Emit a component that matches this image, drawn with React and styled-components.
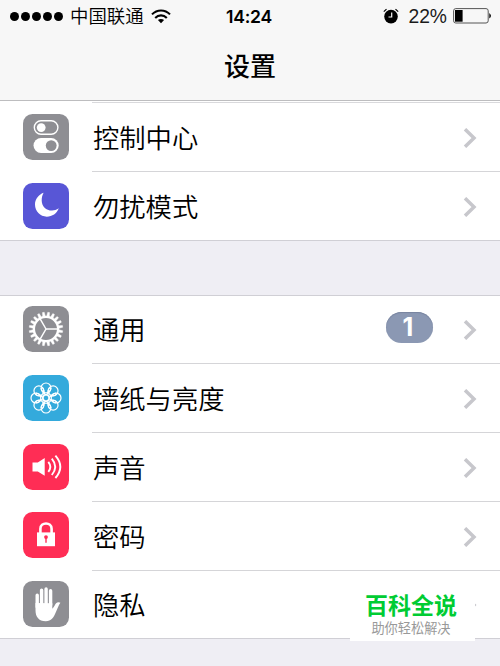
import React from 'react'
import styled, { createGlobalStyle } from 'styled-components'

const petals = [0, 45, 90, 135, 180, 225, 270, 315]
const teeth = Array.from({ length: 20 }, (_, i) => i * 18)

const ControlIcon = () => (
  <>
    <rect x="11.3" y="6.8" width="23.6" height="13.4" rx="6.7" fill="none" stroke="#fff" strokeWidth="1.4" />
    <circle cx="18.2" cy="13.6" r="4.4" fill="#fff" />
    <rect x="10.5" y="24" width="25.2" height="15" rx="7.5" fill="#fff" />
    <circle cx="28.2" cy="31.6" r="5.4" fill="#8e8e93" />
  </>
)

const MoonIcon = () => (
  <path d="M20.6 9.8C15.4 11.8 12 16.3 12 21.6C12 28.3 17.2 33.7 23.8 33.7C29.2 33.7 33.9 30.5 35.8 25.3C33.5 27 31.4 27.5 29 27.5C23 27.5 18.7 23 18.7 17.4C18.7 14.5 19.4 12 20.6 9.8Z" fill="#fff" />
)

const GearIcon = () => (
  <g stroke="#fff" fill="none">
    <circle cx="23" cy="23" r="12.1" strokeWidth="2.3" />
    {teeth.map((a) => (
      <path key={a} d="M21.6 11L22.1 6.2H23.9L24.4 11Z" fill="#fff" strokeWidth="0.4" transform={`rotate(${a + 9} 23 23)`} />
    ))}
    <path d="M23 23H35M23 23L17 12.6M23 23L17 33.4" strokeWidth="1.5" />
  </g>
)

const FlowerIcon = () => (
  <g stroke="#fff" strokeWidth="1.2" fill="none">
    {petals.map((a) => (
      <g key={a} transform={`rotate(${a} 23 23)`}>
        <circle cx="23" cy="12.9" r="4.9" />
        <path d="M18.1 12.9C18.3 16.2 20.4 18.2 23 20C25.6 18.2 27.7 16.2 27.9 12.9" />
      </g>
    ))}
    <circle cx="23" cy="23" r="3" />
  </g>
)

const SoundIcon = () => (
  <g stroke="#fff" strokeWidth="1.9" fill="none">
    <path d="M9.5 18.4H14.8L21.7 14V31.8L14.8 27.4H9.5Z" fill="#fff" stroke="none" />
    <path d="M25.3 17.8Q29.3 22.8 25.3 27.8M28.8 14.6Q35.6 22.8 28.8 31M32.4 11.6Q42.2 22.8 32.4 34" />
  </g>
)

const LockIcon = () => (
  <>
    <path d="M17.4 21V16.7C17.4 9.8 28.6 9.8 28.6 16.7V21" fill="none" stroke="#fff" strokeWidth="2.6" />
    <rect x="14" y="20.4" width="18" height="13.8" fill="#fff" />
    <circle cx="23" cy="25.1" r="1.9" fill="#ff2d55" />
    <path d="M22.3 25.5H23.7V30.7H22.3Z" fill="#ff2d55" />
  </>
)

const HandIcon = () => (
  <g fill="none" stroke="#fff" strokeLinecap="round">
    <path d="M14.2 14.3V26M18.6 9.3V24M23.1 8V24M27.6 9.7V24" strokeWidth="3.4" />
    <path d="M12.5 22L29.3 22.2V27.8C31.3 25.7 32 23.4 33.1 22.2C34.3 20.9 36.4 21 37.4 21.7C35.5 24.3 34.5 27.6 32.7 31.5C30.7 36.5 28.2 40.2 22.8 40.2C15.5 40.2 12.5 35.5 12.5 29.2Z" fill="#fff" stroke="none" />
  </g>
)

const Tile = ({ color, top, children }) => (
  <TileSvg viewBox="0 0 46 46" $top={top}>
    <rect width="46" height="46" rx="9.5" fill={color} />
    {children}
  </TileSvg>
)

const Item = ({ label, color, icon, height, top, badge }) => (
  <Row $height={height}>
    <Tile color={color} top={top}>{icon}</Tile>
    <Cell>
      <Label>{label}</Label>
      {badge && <Badge>{badge}</Badge>}
      <Chevron viewBox="0 0 14 20">
        <path d="M2 1.2L11 10L2 18.8" fill="none" stroke="#c7c7cc" strokeWidth="3.5" />
      </Chevron>
    </Cell>
  </Row>
)

const App = () => (
  <>
    <GlobalStyles />
    <Screen>
      <Header>
        <StatusBar>
          <Carrier>
            <Dots>
              <Dot /><Dot /><Dot /><Dot /><Dot />
            </Dots>
            <CarrierName>中国联通</CarrierName>
            <Wifi viewBox="0 0 20 15">
              <g fill="none" stroke="#000" strokeWidth="2.1">
                <path d="M1 5.4C6 .1 14 .1 19 5.4M4.2 8.9C7.5 5.5 12.5 5.5 15.8 8.9" />
              </g>
              <path d="M6.9 11.1C8.8 9.5 11.2 9.5 13.1 11.1L10 14.2Z" />
            </Wifi>
          </Carrier>
          <Time>14:24</Time>
          <Power>
            <Alarm viewBox="0 0 16 16">
              <circle cx="8" cy="8.6" r="6.8" />
              <path d="M.8 3.6L3.5 1.1M15.2 3.6L12.5 1.1" stroke="#000" strokeWidth="1.2" />
              <path d="M8.7 4.5V9H5.5" fill="none" stroke="#f7f7f7" strokeWidth="1.2" />
            </Alarm>
            <Percent>22%</Percent>
            <Battery viewBox="0 0 39 16">
              <rect x=".6" y=".6" width="34.6" height="14.4" rx="2.2" fill="none" stroke="#555" strokeWidth="1" />
              <rect x="2" y="2" width="7.6" height="11.7" />
              <path d="M36.3 5Q39.6 7.8 36.3 10.6Z" />
            </Battery>
          </Power>
        </StatusBar>
        <Title>设置</Title>
      </Header>
      <Group $first>
        <Item label="控制中心" color="#8e8e93" icon={<ControlIcon />} top={11.7} />
        <Item label="勿扰模式" color="#5856d6" icon={<MoonIcon />} top={11.7} />
      </Group>
      <Group>
        <Item label="通用" color="#8e8e93" icon={<GearIcon />} top={11} height={68} badge="1" />
        <Item label="墙纸与亮度" color="#34aadc" icon={<FlowerIcon />} top={11.8} />
        <Item label="声音" color="#ff2d55" icon={<SoundIcon />} top={11.5} />
        <Item label="密码" color="#ff2d55" icon={<LockIcon />} top={11.2} />
        <Item label="隐私" color="#8e8e93" icon={<HandIcon />} top={11} height={68} />
      </Group>
      <Watermark>
        <Brand>百科全说</Brand>
        <Slogan>助你轻松解决</Slogan>
      </Watermark>
    </Screen>
  </>
)

export default App

const GlobalStyles = createGlobalStyle`
  * {
    box-sizing: border-box;
  }
  body {
    margin: 0;
    background: #efeef4;
    font-family: "Liberation Sans", "Noto Sans CJK SC", sans-serif;
    color: #000;
  }
`
const Screen = styled.div`
  position: relative;
  width: 500px;
  height: 666px;
  overflow: hidden;
  background: #efeef4;
`
const Header = styled.header`
  height: 101px;
  background: #f7f7f7;
  border-bottom: 1px solid #bdbdbf;
`
const StatusBar = styled.div`
  display: grid;
  grid-template-columns: 200px 98px 1fr;
  align-items: center;
  height: 32px;
`
const Carrier = styled.div`
  display: flex;
  align-items: center;
  padding-left: 10px;
  font-size: 18.4px;
  font-weight: 350;
  line-height: 30px;
  white-space: nowrap;
`
const CarrierName = styled.span`
  padding-top: 2px;
`
const Dots = styled.div`
  display: flex;
  gap: 2px;
  margin-right: 7px;
`
const Dot = styled.i`
  width: 9px;
  height: 9px;
  border-radius: 50%;
  background: #000;
`
const Wifi = styled.svg`
  width: 20px;
  height: 15px;
  margin-left: 7px;
`
const Time = styled.div`
  text-align: center;
  font-family: Inter, "Liberation Sans", sans-serif;
  font-size: 17.6px;
  letter-spacing: -0.2px;
  font-weight: 600;
`
const Power = styled.div`
  display: flex;
  align-items: center;
  justify-content: flex-end;
  padding-right: 8px;
`
const Alarm = styled.svg`
  width: 16px;
  height: 16px;
  margin-right: 9px;
`
const Percent = styled.span`
  font-size: 19.3px;
  margin-right: 6px;
  padding-top: 1px;
  color: #1a1a1a;
`
const Battery = styled.svg`
  width: 39px;
  height: 16px;
`
const Title = styled.h1`
  margin: 0;
  padding-top: 13px;
  text-align: center;
  font-size: 26px;
  line-height: 44px;
  font-weight: 500;
`
const Group = styled.section`
  background: #fff;
  margin-bottom: 54px;
  padding-top: ${({ $first }) => ($first ? '1px' : '0')};
  border-top: ${({ $first }) => ($first ? 'none' : '1px solid #d0cfd5')};
  border-bottom: 1px solid #d0cfd5;
  > div:first-of-type > div {
    border-top-color: ${({ $first }) => ($first ? '#d9d9dc' : 'transparent')};
  }
  > div:first-of-type {
    margin-top: ${({ $first }) => ($first ? '0' : '-1px')};
  }
`
const Row = styled.div`
  display: flex;
  height: ${({ $height }) => $height || 69}px;
  padding-left: 23px;
`
const TileSvg = styled.svg`
  flex: none;
  width: 46px;
  height: 46px;
  margin: ${({ $top }) => $top}px 23px 0 0;
`
const Cell = styled.div`
  flex: 1;
  display: flex;
  align-items: center;
  padding-right: 23px;
  border-top: 1px solid #d5d5d8;
`
const Label = styled.span`
  flex: 1;
  font-size: 26.3px;
  font-weight: 350;
  line-height: 40px;
  padding: 3px 0 0 1px;
`
const Badge = styled.span`
  width: 47px;
  height: 31px;
  margin: 0 30px 4px 0;
  border-radius: 16px;
  background: #8b98b3;
  box-shadow: inset 0 1px 1px #78849f;
  color: #fff;
  text-align: center;
  font-family: Inter, "Liberation Sans", sans-serif;
  font-size: 25px;
  line-height: 31px;
  padding-right: 3px;
  font-weight: 700;
`
const Chevron = styled.svg`
  width: 14px;
  height: 20px;
  margin-top: 1px;
`
const Watermark = styled.div`
  position: absolute;
  left: 350px;
  top: 587px;
  width: 125px;
  height: 54px;
  background: #fff;
  text-align: center;
`
const Brand = styled.div`
  padding: 1px 3px 0 0;
  color: #0c3;
  font-size: 23px;
  font-weight: 700;
  line-height: 37px;
`
const Slogan = styled.div`
  padding-right: 3px;
  color: #999;
  font-size: 13.2px;
  line-height: 7px;
`
